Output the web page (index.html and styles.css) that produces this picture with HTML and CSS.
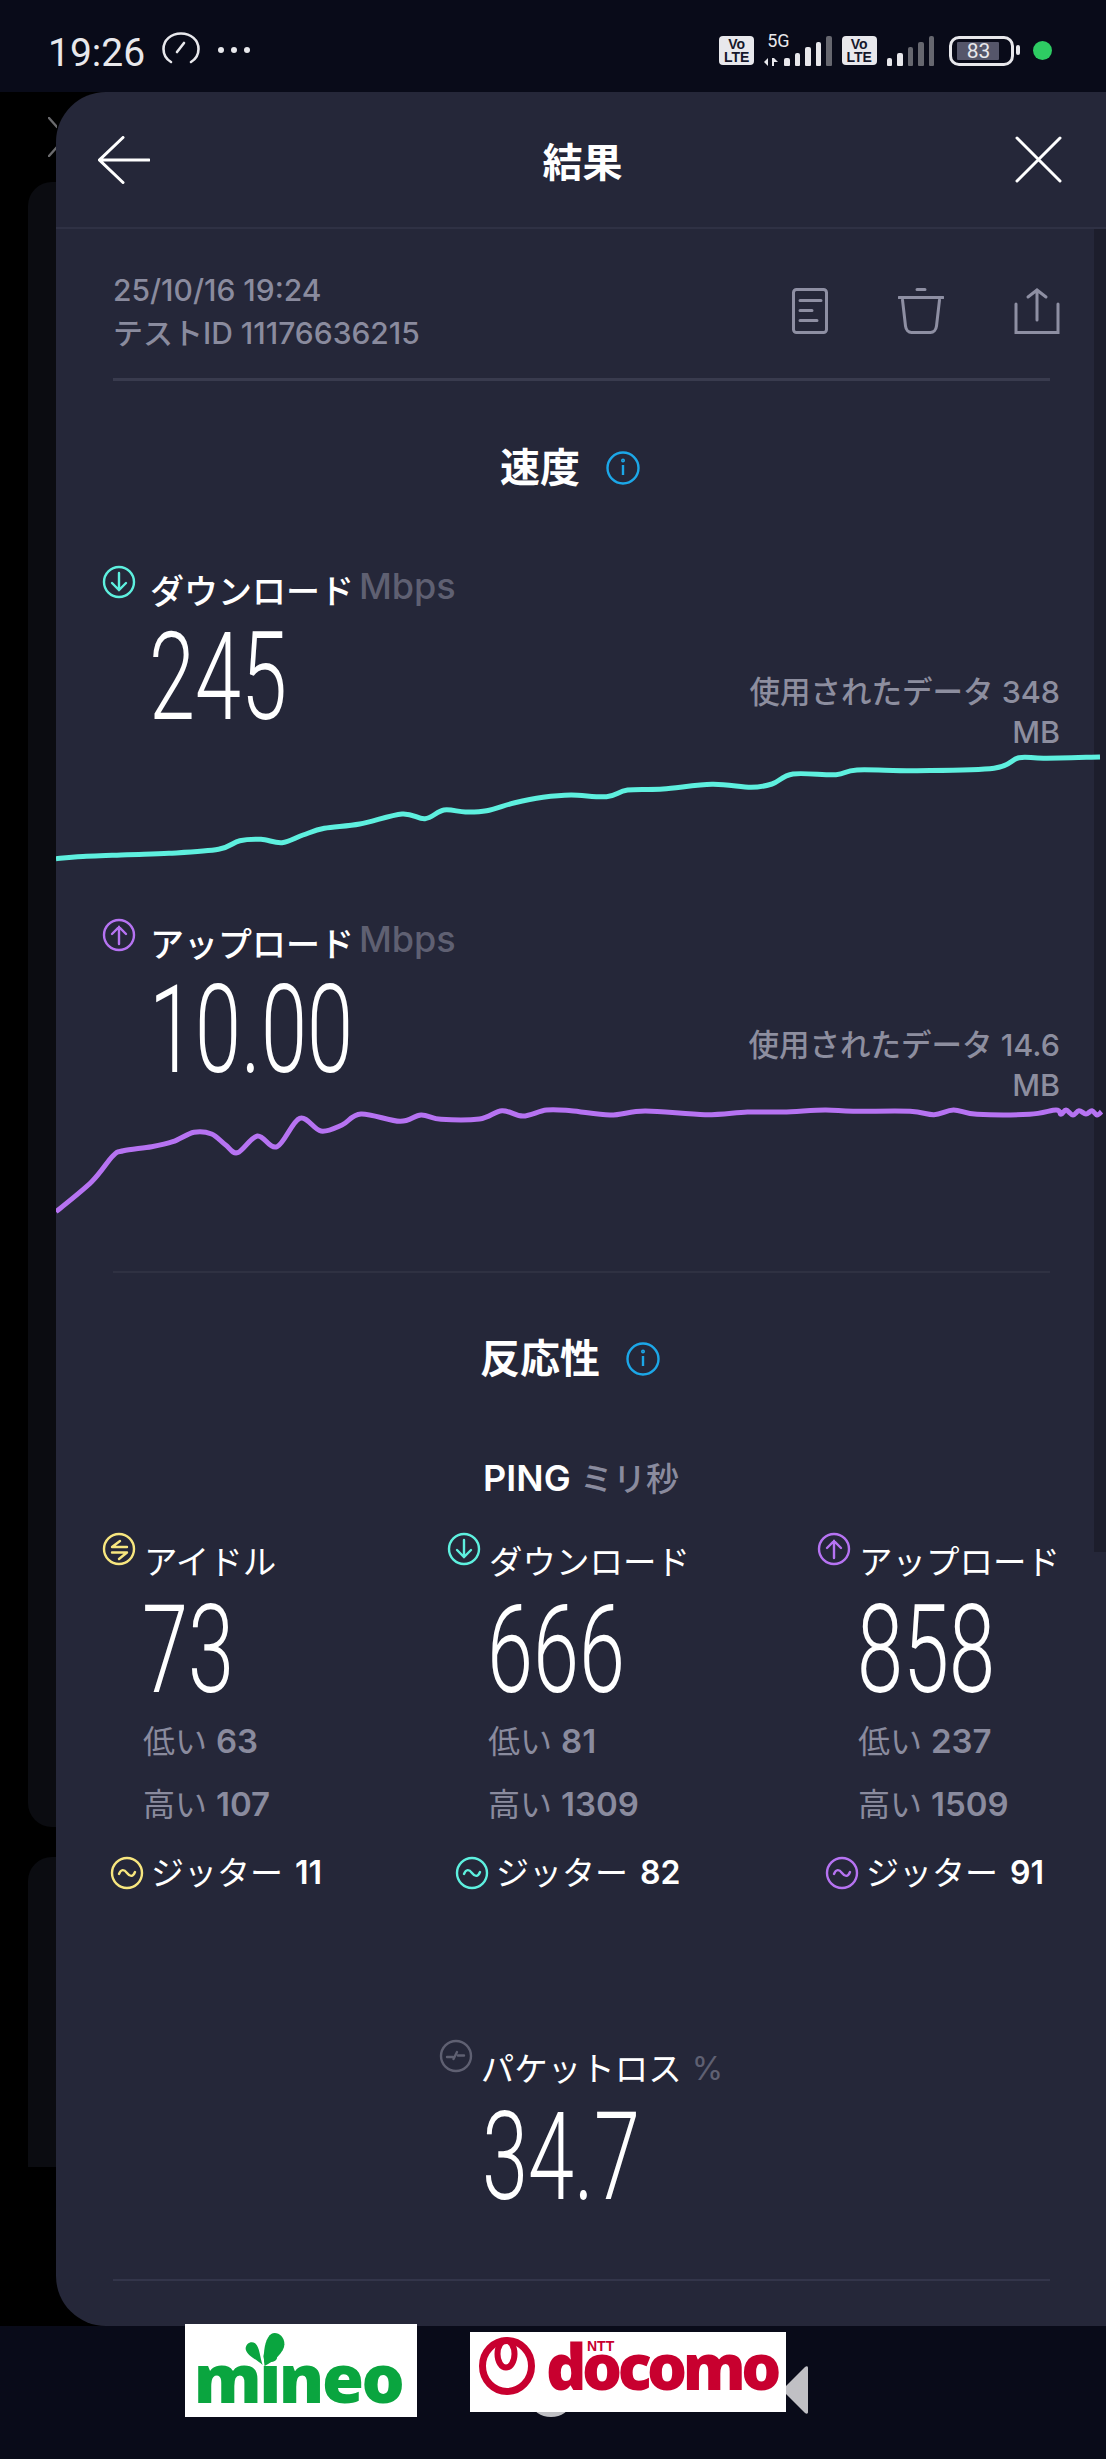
FILE: index.html
```html
<!DOCTYPE html>
<html lang="ja">
<head>
    <meta charset="UTF-8">
    <title>結果</title>
    <link rel="stylesheet" href="styles.css">
</head>
<body>
    <div class="statusbar">
        <span class="clock">19:26</span>
        <svg class="gauge" viewBox="0 0 38 32" fill="none" stroke="#e8e8ec" stroke-width="2.6" stroke-linecap="round"><path d="M9 30C4 27 1.5 22 1.5 17 1.5 8 9 1.5 19 1.5S36.5 8 36.5 17c0 5-2.5 10-7.5 13"/><path d="M15 20l7-9"/></svg>
        <span class="more"><i></i><i></i><i></i></span>
        <div class="status-right">
            <span class="volte">Vo<br>LTE</span>
            <div class="net">
                <span class="net-label">5G</span>
                <svg class="net-arrows" viewBox="0 0 15 8" fill="#e8e8ec"><path d="M0 4l4-4v8zM8 0h2v8H8zM10 0l4 4h-4z"/></svg>
            </div>
            <div class="bars">
                <i class="b1"></i><i class="b2"></i><i class="b3"></i><i class="b4"></i><i class="b5 off"></i>
            </div>
            <span class="volte">Vo<br>LTE</span>
            <div class="bars">
                <i class="b1"></i><i class="b2"></i><i class="b3 off"></i><i class="b4 off"></i><i class="b5 off"></i>
            </div>
            <div class="battery"><span class="battery-fill"></span><span class="battery-num">83</span></div>
            <span class="battery-nub"></span>
            <span class="dot"></span>
        </div>
    </div>

    <div class="stage">
        <div class="behind">
            <svg class="behind-x" viewBox="0 0 9 40" fill="none" stroke="#6b6b6e" stroke-width="2.4" stroke-linecap="round"><path d="M1 1l8 9M1 39l8-9"/></svg>
            <div class="behind-card"></div>
            <div class="behind-card second"></div>
        </div>

        <div class="sheet">
            <div class="scrollbar"></div>

            <div class="sheet-head">
                <svg class="head-icon" viewBox="0 0 52 48" fill="none" stroke="#fff" stroke-width="3" stroke-linecap="round"><path d="M25 1.5L1.5 24 25 46.5M2 24h49"/></svg>
                <h1>結果</h1>
                <svg class="head-icon close" viewBox="0 0 47 47" fill="none" stroke="#fff" stroke-width="3" stroke-linecap="round"><path d="M2 2l43 43M45 2L2 45"/></svg>
            </div>

            <div class="meta">
                <div class="meta-text">
                    <div>25/10/16 19:24</div>
                    <div>テストID 11176636215</div>
                </div>
                <div class="meta-icons">
                    <svg class="icon-doc" viewBox="0 0 36 46" fill="none" stroke="#8e8fa3" stroke-width="3" stroke-linecap="round"><rect x="1.5" y="1.5" width="33" height="43" rx="3"/><path d="M8 12.5h21M8 22.5h12M8 32.5h17"/></svg>
                    <svg class="icon-trash" viewBox="0 0 46 46" fill="none" stroke="#8e8fa3" stroke-width="3" stroke-linecap="round"><path d="M1 9.5h44M19 1.5h8"/><path d="M4.5 12l3 26c.5 4 3 6.5 6 6.5h19c3 0 5.5-2.5 6-6.5l3-26"/></svg>
                    <svg class="icon-share" viewBox="0 0 46 46" fill="none" stroke="#8e8fa3" stroke-width="3" stroke-linecap="round"><path d="M23 32V2M14 9l9-7 9 7"/><path d="M2 16v28.5h42V16"/></svg>
                </div>
            </div>

            <div class="section-title first">
                <h2>速度</h2>
                <svg class="info" viewBox="0 0 34 34" fill="none" stroke="#1ca7e8" stroke-width="2.4"><circle cx="17" cy="17" r="15.5"/><path d="M17 14v10"/><circle cx="17" cy="9.5" r=".8"/></svg>
            </div>

            <div class="speed-row">
                <div class="speed-head">
                    <svg class="ico" viewBox="0 0 34 34" fill="none" stroke="#5ef0df" stroke-width="2.4" stroke-linecap="round"><circle cx="17" cy="17" r="15"/><path d="M17 8v17M10 18l7 7 7-7"/></svg>
                    <span class="speed-label">ダウンロード</span>
                    <span class="speed-unit">Mbps</span>
                </div>
                <div class="speed-main">
                    <span class="big">245</span>
                    <div class="used">使用されたデータ 348 MB</div>
                </div>
                <svg class="chart" viewBox="0 2 1050 132" fill="none" stroke="#5ef0df" stroke-width="5" stroke-linejoin="round">
                    <polyline points="0,118.7 21.6,116.7 71,114.7 113,113.3 162.6,109.3 183.8,100.7 205,99.3 226,102.7 247,95 268.4,88.3 303.7,84 346,74 369,78.7 388,70 409.4,72 430.6,70.7 458.8,62.7 487,57.3 515,55 550.5,56.7 571.6,50 607,49 656,44.3 695,47.3 716,44 737,34 780,34.7 801,30 861,30.7 938,28.3 963,17.7 988,18.3 1044,17"/>
                </svg>
            </div>

            <div class="speed-row">
                <div class="speed-head">
                    <svg class="ico" viewBox="0 0 34 34" fill="none" stroke="#b673f2" stroke-width="2.4" stroke-linecap="round"><circle cx="17" cy="17" r="15"/><path d="M17 26V9M10 16l7-7 7 7"/></svg>
                    <span class="speed-label">アップロード</span>
                    <span class="speed-unit">Mbps</span>
                </div>
                <div class="speed-main">
                    <span class="big">10.00</span>
                    <div class="used">使用されたデータ 14.6 MB</div>
                </div>
                <svg class="chart" viewBox="0 0 1050 132" fill="none" stroke="#b673f2" stroke-width="5" stroke-linejoin="round">
                    <polyline points="0,116.7 35.7,86.7 56.8,61 67.4,55.7 95.6,51.7 116.8,46.7 138,37.3 155.6,39 169.7,50 181.7,57.7 201.4,41 221,51.7 243.7,23.3 265,36 286,30 305,19 344,26.3 365,20 385,24.3 423.5,24 446,15.7 467,21 490.5,15 515,15.7 554,20 589,16 649,19.7 691.5,17 727,17 769,15 797,16.3 854,16.3 878,19.7 897.5,15 921,19.3 973.6,19.3 1000,15 1005,19.3 1010,15 1017,20 1023,15.7 1030,19 1036,15.7 1041,20 1045.5,16.7"/>
                </svg>
            </div>

            <div class="rule"></div>

            <div class="section-title second">
                <h2>反応性</h2>
                <svg class="info" viewBox="0 0 34 34" fill="none" stroke="#1ca7e8" stroke-width="2.4"><circle cx="17" cy="17" r="15.5"/><path d="M17 14v10"/><circle cx="17" cy="9.5" r=".8"/></svg>
            </div>

            <div class="ping-title"><b>PING</b> <span>ミリ秒</span></div>

            <div class="ping-grid">
                <div class="ping-col">
                    <div class="ping-head">
                        <svg class="ico" viewBox="0 0 34 34" fill="none" stroke="#f7e67f" stroke-width="2.4" stroke-linecap="round" stroke-linejoin="round"><circle cx="17" cy="17" r="15"/><path d="M25 15H10l8-6M10 20.5h15l-8 6.5"/></svg>
                        <span class="ping-label">アイドル</span>
                    </div>
                    <span class="big ping-num">73</span>
                    <div class="range">低い <b>63</b></div>
                    <div class="range">高い <b>107</b></div>
                    <div class="jitter">
                        <svg class="ico" viewBox="0 0 34 34" fill="none" stroke="#f7e67f" stroke-width="2.4" stroke-linecap="round"><circle cx="17" cy="17" r="15"/><path d="M9 18c2-5 5-5 8-1s6 4 8-1"/></svg>
                        <span>ジッター</span><b>11</b>
                    </div>
                </div>
                <div class="ping-col">
                    <div class="ping-head">
                        <svg class="ico" viewBox="0 0 34 34" fill="none" stroke="#5ef0df" stroke-width="2.4" stroke-linecap="round"><circle cx="17" cy="17" r="15"/><path d="M17 8v17M10 18l7 7 7-7"/></svg>
                        <span class="ping-label">ダウンロード</span>
                    </div>
                    <span class="big ping-num">666</span>
                    <div class="range">低い <b>81</b></div>
                    <div class="range">高い <b>1309</b></div>
                    <div class="jitter">
                        <svg class="ico" viewBox="0 0 34 34" fill="none" stroke="#5ef0df" stroke-width="2.4" stroke-linecap="round"><circle cx="17" cy="17" r="15"/><path d="M9 18c2-5 5-5 8-1s6 4 8-1"/></svg>
                        <span>ジッター</span><b>82</b>
                    </div>
                </div>
                <div class="ping-col">
                    <div class="ping-head">
                        <svg class="ico" viewBox="0 0 34 34" fill="none" stroke="#b673f2" stroke-width="2.4" stroke-linecap="round"><circle cx="17" cy="17" r="15"/><path d="M17 26V9M10 16l7-7 7 7"/></svg>
                        <span class="ping-label">アップロード</span>
                    </div>
                    <span class="big ping-num">858</span>
                    <div class="range">低い <b>237</b></div>
                    <div class="range">高い <b>1509</b></div>
                    <div class="jitter">
                        <svg class="ico" viewBox="0 0 34 34" fill="none" stroke="#b673f2" stroke-width="2.4" stroke-linecap="round"><circle cx="17" cy="17" r="15"/><path d="M9 18c2-5 5-5 8-1s6 4 8-1"/></svg>
                        <span>ジッター</span><b>91</b>
                    </div>
                </div>
            </div>

            <div class="loss">
                <div class="ping-head">
                    <svg class="ico" viewBox="0 0 34 34" fill="none" stroke="#5f6072" stroke-width="2.4" stroke-linecap="round"><circle cx="17" cy="17" r="15"/><path d="M8 18h6M14.5 20l3.5-7M19 16.5h6"/></svg>
                    <span class="ping-label">パケットロス</span>
                    <span class="loss-unit">%</span>
                </div>
                <span class="big loss-num">34.7</span>
            </div>

            <div class="rule last"></div>
        </div>
    </div>

    <div class="navbar">
        <div class="logo mineo">
            <span>mineo</span>
            <svg class="leaf" viewBox="0 -1 42 37" fill="#0aa53f"><path d="M20 35C18 22 20 6 27 1 33-2 41 3 41 12 41 20 30 30 20 35Z"/><path d="M18 34C12 28 1 24 0 17 0 11 6 8 10 11 15 15 15 26 18 34Z"/></svg>
        </div>
        <div class="docomo-wrap">
            <span class="nav-home"></span>
            <div class="logo docomo">
                <svg class="docomo-mark" viewBox="0 0 56 58" fill="none" stroke="#c8002f" stroke-width="7"><ellipse cx="28" cy="29" rx="24.5" ry="25.5"/><ellipse cx="27" cy="17" rx="8.5" ry="13.5" stroke-width="6"/></svg>
                <div class="docomo-text"><small>NTT</small><span>docomo</span></div>
            </div>
        </div>
        <svg class="nav-back" viewBox="0 0 22 48" fill="#c0c0c4"><path d="M22 2v44c0 2-1.5 2-3 1L0 28v-8L19 1c1.5-1 3-1 3 1z"/></svg>
    </div>

    <script src="chart.js"></script>
</body>
</html>
```

FILE: styles.css
```css
* {
    box-sizing: border-box;
}
html, body {
    margin: 0;
    height: 2459px;
    overflow: hidden;
}
body {
    background-color: #090b19;
    color: #fff;
    font-family: Inter, "Noto Sans CJK JP", sans-serif;
}
h1, h2 {
    margin: 0;
}

/* status bar */
.statusbar {
    height: 92px;
    display: flex;
    align-items: flex-start;
    padding-left: 48px;
    color: #e8e8ec;
}
.clock {
    font-family: Roboto, sans-serif;
    font-size: 39px;
    line-height: 44px;
    margin-top: 31px;
}
.gauge {
    width: 38px;
    height: 32px;
    margin: 32px 0 0 17px;
}
.more {
    display: flex;
    gap: 7px;
    margin: 47px 0 0 18px;
}
.more i {
    width: 6px;
    height: 6px;
    border-radius: 50%;
    background-color: #e8e8ec;
}
.status-right {
    display: flex;
    align-items: flex-start;
    margin-left: 469px;
    padding-top: 36px;
}
.volte {
    width: 35px;
    height: 29px;
    background-color: #e8e8ec;
    border-radius: 4px;
    color: #15172a;
    font-family: "Liberation Sans", sans-serif;
    font-weight: bold;
    font-size: 14px;
    line-height: 13px;
    text-align: center;
    padding-top: 2px;
}
.net {
    width: 20px;
    margin-left: 10px;
    position: relative;
    height: 30px;
}
.net-label {
    position: absolute;
    left: 3px;
    top: -5px;
    font-family: Roboto, sans-serif;
    font-size: 18px;
    line-height: 20px;
}
.net-arrows {
    position: absolute;
    left: 0;
    top: 22px;
    width: 15px;
    height: 8px;
}
.bars {
    display: flex;
    align-items: flex-end;
    gap: 5px;
    height: 30px;
}
.bars i {
    width: 5.5px;
    background-color: #e8e8ec;
    border-radius: 2px 2px 1px 1px;
}
.bars .off {
    background-color: #66676f;
}
.b1 { height: 8px; }
.b2 { height: 13px; }
.b3 { height: 19px; }
.b4 { height: 24px; }
.b5 { height: 30px; }
.bars + .volte {
    margin-left: 10px;
}
.volte + .bars {
    margin-left: 10px;
}
.battery {
    position: relative;
    width: 65px;
    height: 30px;
    margin-left: 15px;
    border: 3px solid #e8e8ec;
    border-radius: 10px;
}
.battery-fill {
    position: absolute;
    left: 5px;
    top: 3px;
    width: 42px;
    height: 18px;
    background-color: #55566a;
    border-radius: 1px;
}
.battery-num {
    position: absolute;
    left: 0;
    right: 6px;
    top: 0;
    text-align: center;
    font-family: Roboto, sans-serif;
    font-size: 21px;
    line-height: 24px;
}
.battery-nub {
    width: 4px;
    height: 10px;
    margin: 9px 0 0 2px;
    background-color: #e8e8ec;
    border-radius: 2px;
}
.dot {
    width: 19px;
    height: 19px;
    margin: 5px 0 0 13px;
    background-color: #2ecc63;
    border-radius: 50%;
}

/* what shows behind the sheet */
.stage {
    height: 2234px;
    display: flex;
    background-color: #000;
}
.behind {
    width: 56px;
    flex: none;
    padding-left: 28px;
}
.behind-x {
    display: block;
    width: 9px;
    height: 40px;
    margin: 25px 0 0 20px;
}
.behind-card {
    height: 1645px;
    margin-top: 25px;
    background-color: #0b0c11;
    border-radius: 24px 0 0 24px;
}
.behind-card.second {
    height: 310px;
    margin-top: 30px;
    border-radius: 24px 0 0 0;
}

/* sheet */
.sheet {
    flex: 1;
    position: relative;
    background-color: #252739;
    border-radius: 50px 0 0 50px;
}
.scrollbar {
    position: absolute;
    top: 137px;
    right: 0;
    width: 12px;
    height: 1323px;
    background-color: #1d1e2c;
}
.sheet-head {
    height: 137px;
    display: flex;
    align-items: center;
    justify-content: space-between;
    padding: 0 44px 0 42px;
    border-bottom: 2px solid #2f3144;
}
.head-icon {
    width: 52px;
    height: 48px;
}
.head-icon.close {
    width: 47px;
    height: 47px;
}
.sheet-head h1 {
    font-size: 40px;
    font-weight: 700;
}
.meta {
    height: 152px;
    margin: 0 56px 0 57px;
    padding-top: 40px;
    display: flex;
    justify-content: space-between;
    border-bottom: 3px solid #393b4e;
    color: #8a8b9e;
    font-size: 30px;
    font-weight: 500;
    line-height: 43px;
}
.meta-icons {
    display: flex;
    align-items: flex-start;
    gap: 70px;
    margin: 19px -10px 0 0;
}
.meta-icons svg {
    height: 46px;
    width: 46px;
}
.meta-icons .icon-doc {
    width: 36px;
}
.section-title {
    display: flex;
    align-items: center;
    justify-content: center;
    gap: 26px;
    padding-right: 22px;
}
.section-title h2 {
    font-size: 40px;
    line-height: 48px;
    font-weight: 700;
}
.section-title.first {
    margin-top: 63px;
}
.section-title.second {
    margin-top: 62px;
}
.info {
    width: 34px;
    height: 34px;
}

/* speed */
.speed-row {
    margin-bottom: 44px;
}
.section-title.first + .speed-row {
    margin-top: 73px;
}
.ico {
    width: 34px;
    height: 34px;
    flex: none;
}
.speed-head {
    height: 55px;
    display: flex;
    align-items: flex-start;
    padding-left: 46px;
}
.speed-label {
    margin: 2px 0 0 14px;
    font-size: 34px;
    font-weight: 500;
    line-height: 50px;
}
.speed-unit {
    margin: 0 0 0 5px;
    color: #5f6072;
    font-size: 36px;
    font-weight: 500;
    line-height: 42px;
}
.speed-main {
    height: 122px;
    display: flex;
    justify-content: space-between;
    padding: 0 46px 0 93px;
}
.big {
    display: inline-block;
    font-family: Roboto, sans-serif;
    font-weight: 300;
    font-size: 122px;
    line-height: 90px;
    transform: scaleX(0.68);
    transform-origin: left;
    margin-top: 13px;
}
.used {
    width: 350px;
    padding-top: 52px;
    text-align: right;
    color: #8d8e9f;
    font-size: 30.5px;
    font-weight: 500;
    line-height: 40px;
}
.chart {
    display: block;
    position: relative;
    width: 1050px;
    height: 132px;
}
.rule {
    height: 2px;
    margin: 0 56px 0 57px;
    background-color: #2f3142;
}
.rule.last {
    margin-top: 76px;
    background-color: #33354a;
}

/* ping */
.ping-title {
    margin-top: 72px;
    text-align: center;
    font-size: 33px;
    line-height: 46px;
}
.ping-title b {
    font-size: 36px;
    font-weight: 600;
}
.ping-title span {
    color: #8a8b9e;
    font-weight: 500;
}
.ping-grid {
    margin-top: 30px;
    padding-left: 46px;
    display: grid;
    grid-template-columns: 345px 370px 1fr;
}
.ping-head {
    height: 55px;
    display: flex;
    align-items: flex-start;
}
.ping-label {
    margin: 5px 0 0 8px;
    font-size: 33.5px;
    line-height: 50px;
}
.ping-num {
    display: block;
    margin: 19px 0 0 40px;
}
.range {
    padding-left: 41px;
    color: #8a8b9e;
    font-size: 32px;
    line-height: 63px;
}
.ping-num + .range {
    margin-top: 14px;
}
.range b {
    font-size: 33px;
    font-weight: 600;
}
.jitter {
    display: flex;
    align-items: center;
    margin-top: 19px;
    padding-left: 8px;
    font-size: 33px;
    line-height: 36px;
}
.jitter span {
    margin-left: 7px;
}
.jitter b {
    margin-left: 12px;
    font-size: 32px;
    font-weight: 600;
}
.loss {
    width: fit-content;
    margin: 148px auto 0;
}
.loss-unit {
    margin: 5px 0 0 10px;
    color: #5f6072;
    font-size: 32px;
    line-height: 50px;
}
.loss-num {
    display: block;
    margin: 19px 0 0 43px;
}

/* bottom bar, with the operator logos pasted on top */
.navbar {
    display: flex;
    align-items: flex-start;
    padding-left: 185px;
    margin-top: -2px;
    position: relative;
}
.logo {
    background-color: #fff;
}
.mineo {
    width: 232px;
    height: 93px;
    position: relative;
    text-align: center;
    color: #0aa53f;
    font-family: "Open Sans", sans-serif;
    font-weight: 800;
    font-size: 68px;
    line-height: 66px;
    padding: 20px 6px 0 0;
    letter-spacing: -2.5px;
}
.leaf {
    position: absolute;
    left: 60px;
    top: 8px;
    width: 41px;
    height: 35px;
}
.docomo-wrap {
    position: relative;
    margin: 8px 0 0 53px;
}
.docomo {
    position: relative;
    width: 316px;
    height: 80px;
    display: flex;
    align-items: flex-start;
    padding-left: 9px;
}
.nav-home {
    position: absolute;
    left: 62px;
    top: 58px;
    width: 38px;
    height: 27px;
    border-radius: 50%;
    background-color: #c0c0c4;
}
.docomo-mark {
    width: 56px;
    height: 58px;
    flex: none;
    margin-top: 5px;
}
.docomo-text {
    position: relative;
    margin: 4px 0 0 11px;
    color: #c8002f;
    font-family: "Open Sans", sans-serif;
    font-weight: 800;
    font-size: 63px;
    line-height: 60px;
    letter-spacing: -4.5px;
}
.docomo-text small {
    position: absolute;
    left: 41px;
    top: 3px;
    font-family: "Liberation Sans", sans-serif;
    font-weight: bold;
    font-size: 14px;
    line-height: 14px;
    letter-spacing: 0;
}
.nav-back {
    width: 22px;
    height: 48px;
    margin-top: 42px;
}
```

FILE: chart.js
```js
// Redraw each chart polyline as a smooth curve through the same points
document.querySelectorAll('.chart polyline').forEach(function(line) {
    const pts = line.getAttribute('points').trim().split(/\s+/).map(function(p) {
        return p.split(',').map(Number);
    });

    let d = 'M' + pts[0].join(' ');
    for (let i = 0; i < pts.length - 1; i++) {
        const p0 = pts[Math.max(i - 1, 0)];
        const p1 = pts[i];
        const p2 = pts[i + 1];
        const p3 = pts[Math.min(i + 2, pts.length - 1)];
        const c1x = p1[0] + (p2[0] - p0[0]) / 6;
        const c1y = p1[1] + (p2[1] - p0[1]) / 6;
        const c2x = p2[0] - (p3[0] - p1[0]) / 6;
        const c2y = p2[1] - (p3[1] - p1[1]) / 6;
        d += 'C' + [c1x, c1y, c2x, c2y, p2[0], p2[1]].map(function(n) {
            return n.toFixed(1);
        }).join(' ');
    }

    const path = document.createElementNS('http://www.w3.org/2000/svg', 'path');
    path.setAttribute('d', d);
    line.replaceWith(path);
});
```
